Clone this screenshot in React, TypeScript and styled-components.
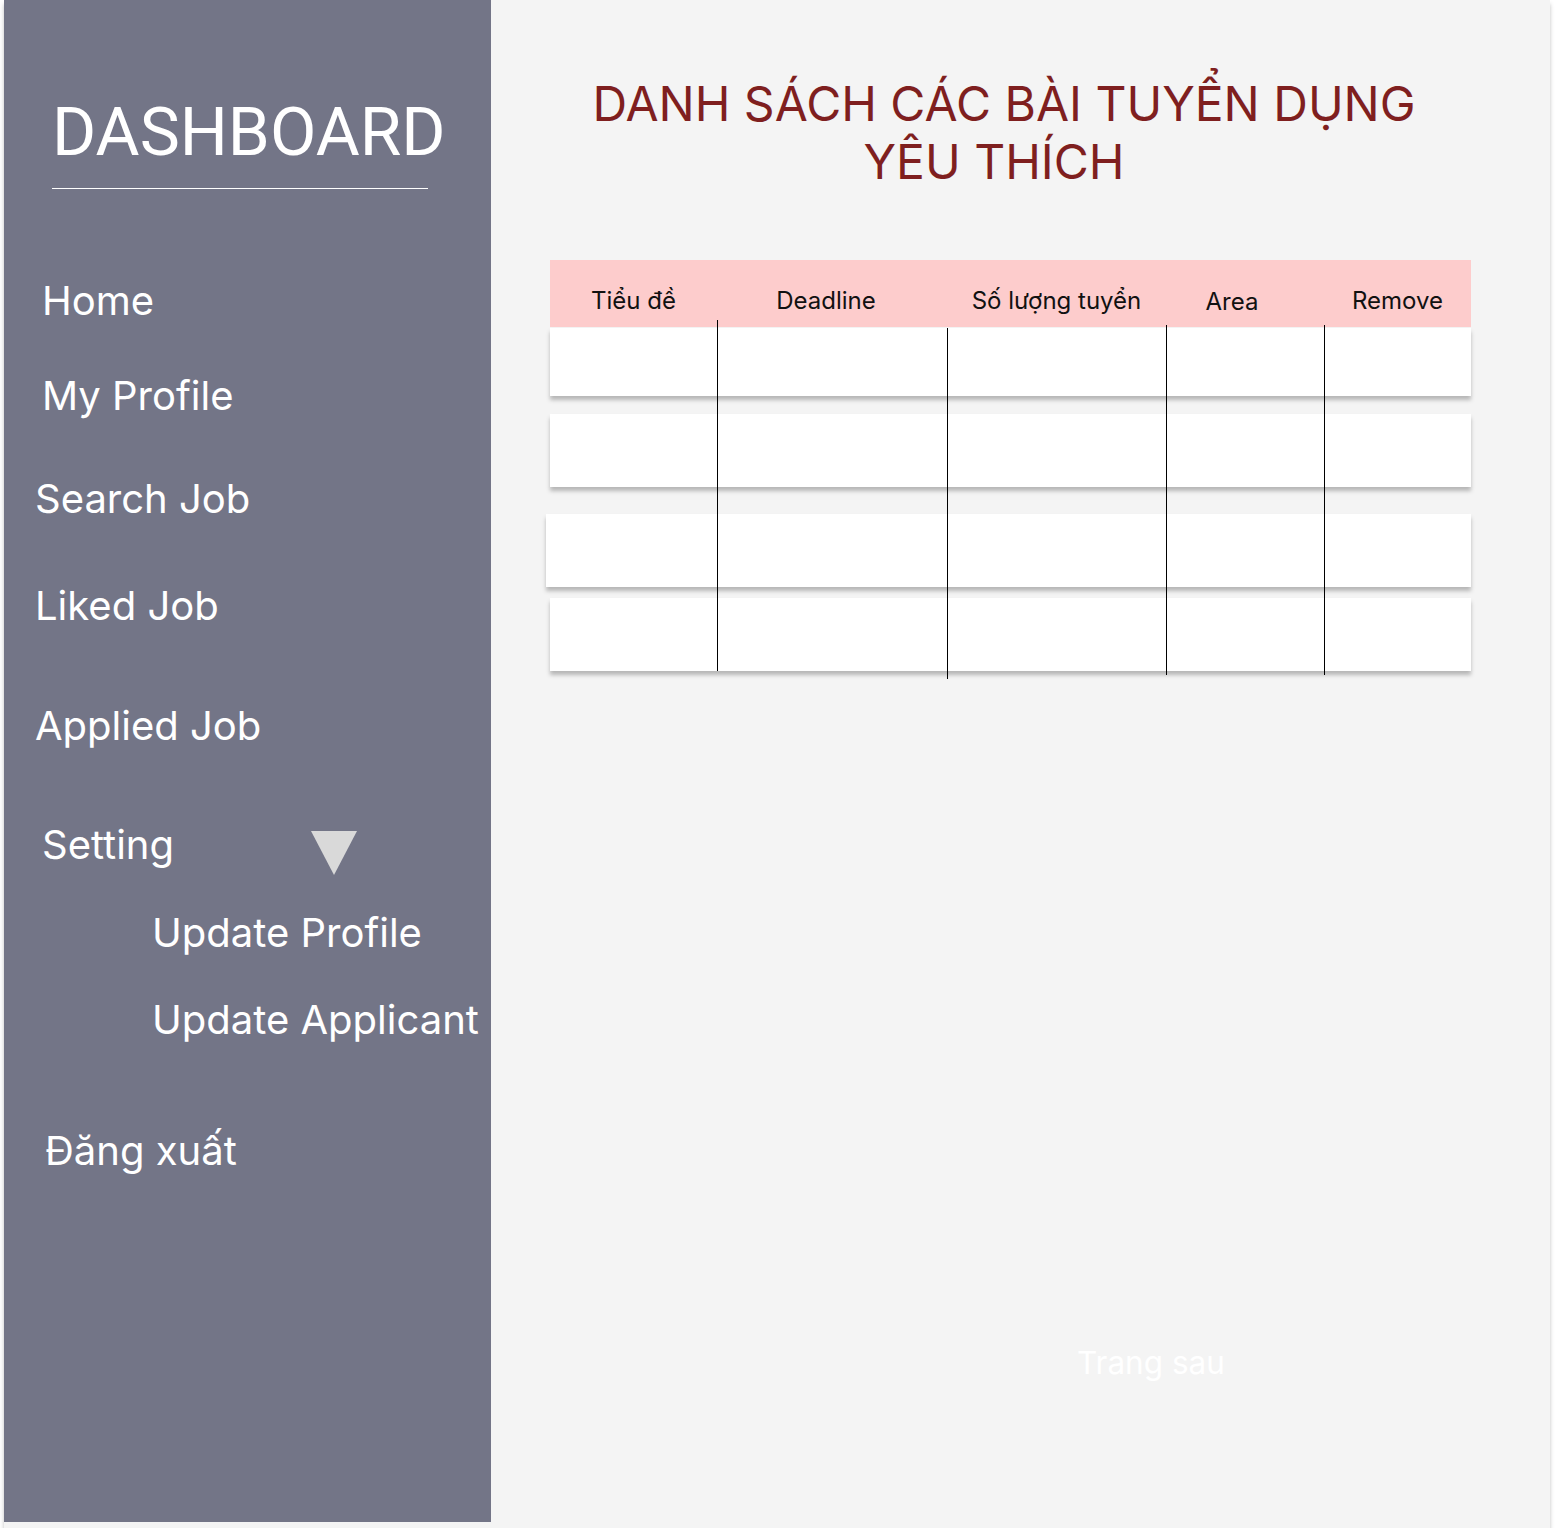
import React from "react";
import styled, { createGlobalStyle } from "styled-components";

const GlobalStyle = createGlobalStyle`
  html, body {
    margin: 0;
    padding: 0;
    background: #ffffff;
  }
  body {
    font-family: Inter, "Noto Sans", sans-serif;
  }
  * { box-sizing: border-box; }
`;

const Frame = styled.div`
  display: flex;
  align-items: flex-start;
  margin-left: 4px;
  width: 1546px;
  height: 1528px;
  background: #f4f4f4;
  box-shadow: 0 4px 4px rgba(0, 0, 0, 0.25);
`;

const Sidebar = styled.aside`
  display: flex;
  flex-direction: column;
  width: 487px;
  height: 1522px;
  flex-shrink: 0;
  padding-top: 93px;
  background: #737587;
`;

const Brand = styled.h1`
  margin: 0 0 0 48px;
  font-family: Roboto, "Liberation Sans", sans-serif;
  font-weight: 400;
  font-size: 67.5px;
  line-height: 78px;
  color: #ffffff;
`;

const Divider = styled.div`
  margin: 17px 0 0 48px;
  width: 376px;
  height: 1px;
  background: #ffffff;
`;

const Nav = styled.nav`
  display: flex;
  flex-direction: column;
`;

const NavItem = styled.a<{ $indent: number; $space: number }>`
  display: block;
  margin-top: ${(p) => p.$space}px;
  padding-left: ${(p) => p.$indent}px;
  font-family: Inter, "Noto Sans", sans-serif;
  font-size: 40px;
  line-height: 46px;
  font-weight: 400;
  color: #ffffff;
  text-decoration: none;
  white-space: nowrap;
`;

const NavRow = styled.div<{ $space: number }>`
  display: flex;
  align-items: flex-start;
  margin-top: ${(p) => p.$space}px;
`;

const Caret = styled.span`
  display: block;
  width: 0;
  height: 0;
  margin: 9px 0 0 137px;
  border-left: 23.5px solid transparent;
  border-right: 23.5px solid transparent;
  border-top: 44px solid #d9d9d9;
`;

const Main = styled.main`
  flex: 1;
  display: flex;
  flex-direction: column;
  align-items: flex-start;
  padding: 75px 0 0 59px;
`;

const Title = styled.h2`
  margin: 0;
  width: 908px;
  text-align: center;
  font-family: Inter, "Noto Sans", sans-serif;
  font-weight: 400;
  font-size: 48px;
  line-height: 58px;
  color: #7f1f1f;
`;

const TitleLine = styled.span<{ $nudge?: number }>`
  display: block;
  padding-right: ${(p) => (p.$nudge ?? 0) * 2}px;
`;

const Table = styled.div`
  position: relative;
  margin-top: 69px;
  width: 921px;
  display: flex;
  flex-direction: column;
`;

const columns = "167px 230px 219px 158px 147px";

const HeaderRow = styled.div`
  display: grid;
  grid-template-columns: ${columns};
  height: 67px;
  padding-top: 26px;
  background: #fdcccc;
`;

const HeaderCell = styled.div<{ $shift?: number; $drop?: number }>`
  text-align: center;
  padding-right: ${(p) => (p.$shift ?? 0) * 2}px;
  padding-top: ${(p) => p.$drop ?? 0}px;
  font-family: Inter, "Noto Sans", sans-serif;
  font-size: 24px;
  line-height: 29px;
  color: #111111;
  white-space: nowrap;
`;

const BodyRow = styled.div<{ $height: number; $space: number; $bleed?: number }>`
  height: ${(p) => p.$height}px;
  margin-top: ${(p) => p.$space}px;
  margin-left: ${(p) => -(p.$bleed ?? 0)}px;
  background: #ffffff;
  box-shadow: 0 4px 4px rgba(0, 0, 0, 0.25);
`;

const ColumnLine = styled.span<{ $left: number; $top: number; $height: number }>`
  position: absolute;
  z-index: 2;
  left: ${(p) => p.$left}px;
  top: ${(p) => p.$top}px;
  width: 1px;
  height: ${(p) => p.$height}px;
  background: #000000;
`;

const NextPage = styled.a`
  margin: 672px 0 0 527px;
  font-family: Inter, "Noto Sans", sans-serif;
  font-size: 31.5px;
  line-height: 39px;
  color: #ffffff;
  text-decoration: none;
`;

const headers = [
  { label: "Tiểu đề" },
  { label: "Deadline", shift: 6 },
  { label: "Số lượng tuyển" },
  { label: "Area", shift: 13, drop: 1 },
  { label: "Remove" },
];

const rows = [
  { height: 68, space: 1 },
  { height: 73, space: 18 },
  { height: 73, space: 27, bleed: 4 },
  { height: 73, space: 11 },
];

const lines = [
  { left: 167, top: 60, height: 351 },
  { left: 397, top: 68, height: 351 },
  { left: 616, top: 65, height: 350 },
  { left: 774, top: 65, height: 350 },
];

export default function App() {
  return (
    <>
      <GlobalStyle />
      <Frame>
        <Sidebar>
          <Brand>DASHBOARD</Brand>
          <Divider />
          <Nav>
            <NavItem $indent={38} $space={89}>Home</NavItem>
            <NavItem $indent={38} $space={49}>My Profile</NavItem>
            <NavItem $indent={31} $space={57}>Search Job</NavItem>
            <NavItem $indent={31} $space={61}>Liked Job</NavItem>
            <NavItem $indent={31} $space={74}>Applied Job</NavItem>
            <NavRow $space={73}>
              <NavItem $indent={38} $space={0}>Setting</NavItem>
              <Caret />
            </NavRow>
            <NavItem $indent={148} $space={35}>Update Profile</NavItem>
            <NavItem $indent={148} $space={41}>Update Applicant</NavItem>
            <NavItem $indent={41} $space={85}>Đăng xuất</NavItem>
          </Nav>
        </Sidebar>
        <Main>
          <Title>
            <TitleLine>DANH SÁCH CÁC BÀI TUYỂN DỤNG</TitleLine>
            <TitleLine $nudge={10}>YÊU THÍCH</TitleLine>
          </Title>
          <Table>
            <HeaderRow>
              {headers.map((h) => (
                <HeaderCell key={h.label} $shift={h.shift} $drop={h.drop}>
                  {h.label}
                </HeaderCell>
              ))}
            </HeaderRow>
            {rows.map((r, i) => (
              <BodyRow key={i} $height={r.height} $space={r.space} $bleed={r.bleed} />
            ))}
            {lines.map((l, i) => (
              <ColumnLine key={i} $left={l.left} $top={l.top} $height={l.height} />
            ))}
          </Table>
          <NextPage>Trang sau</NextPage>
        </Main>
      </Frame>
    </>
  );
}
